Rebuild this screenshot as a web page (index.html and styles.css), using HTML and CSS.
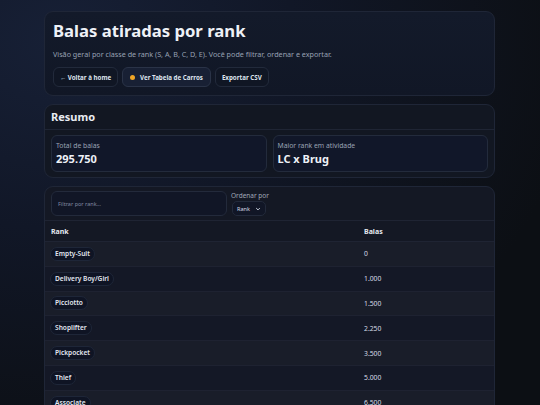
FILE: index.html
```html
<!DOCTYPE html>
<html lang="pt-BR">
<head>
<meta charset="utf-8">
<title>Balas atiradas por rank</title>
<link rel="stylesheet" href="styles.css">
</head>
<body>
<main class="wrap">
  <section class="card hero">
    <h1 class="title">Balas atiradas por rank</h1>
    <p class="sub">Visão geral por classe de rank (S, A, B, C, D, E). Você pode filtrar, ordenar e exportar.</p>
    <div class="actions">
      <a class="btn">← Voltar à home</a>
      <a class="btn btn-alt"><span class="dot"></span>Ver Tabela de Carros</a>
      <a class="btn">Exportar CSV</a>
    </div>
  </section>

  <section class="card summary">
    <h2 class="sum-title">Resumo</h2>
    <div class="stats">
      <div class="stat"><div class="stat-label">Total de balas</div><div class="stat-value">295.750</div></div>
      <div class="stat"><div class="stat-label">Maior rank em atividade</div><div class="stat-value">LC x Brug</div></div>
    </div>
  </section>

  <section class="card tablecard">
    <div class="controls">
      <div class="search">Filtrar por rank...</div>
      <div class="order">
        <div class="order-label">Ordenar por</div>
        <div class="select">Rank <svg class="chev" viewBox="0 0 10 10" width="6" height="6"><path d="M2 3.5 L5 6.5 L8 3.5" fill="none" stroke="#cfd6e4" stroke-width="1.6"/></svg></div>
      </div>
    </div>
    <table class="tbl">
      <thead><tr><th class="c1">Rank</th><th>Balas</th></tr></thead>
      <tbody>
        <tr><td class="c1"><span class="pill">Empty-Suit</span></td><td>0</td></tr>
        <tr><td class="c1"><span class="pill">Delivery Boy/Girl</span></td><td>1.000</td></tr>
        <tr><td class="c1"><span class="pill">Picciotto</span></td><td>1.500</td></tr>
        <tr><td class="c1"><span class="pill">Shoplifter</span></td><td>2.250</td></tr>
        <tr><td class="c1"><span class="pill">Pickpocket</span></td><td>3.500</td></tr>
        <tr><td class="c1"><span class="pill">Thief</span></td><td>5.000</td></tr>
        <tr><td class="c1"><span class="pill">Associate</span></td><td>6.500</td></tr>
      </tbody>
    </table>
  </section>
</main>
</body>
</html>
```

FILE: styles.css
```css
html, body {
  margin: 0;
  padding: 0;
  height: 100%;
}
body {
  font-family: "Noto Sans", "Open Sans", sans-serif;
  color: #e6eaf2;
  background: radial-gradient(ellipse 520px 420px at 60px 40px, #172036 0%, #111727 45%, #0c0f14 100%);
  background-color: #0c0f14;
  overflow: hidden;
}
.wrap {
  width: 451px;
  margin: 0 0 0 44px;
  padding-top: 11px;
  display: flex;
  flex-direction: column;
  gap: 8px;
}
.card {
  background: #121826;
  border: 1px solid #1f2637;
  border-radius: 9px;
  box-sizing: border-box;
}
.hero {
  padding: 7px 8px 8px 8px;
  background: linear-gradient(180deg, #131a2a, #111726);
}
.title {
  margin: 0;
  font-size: 16.7px;
  line-height: 24px;
  font-weight: 700;
  color: #eef1f7;
}
.sub {
  margin: 6px 0 0 0;
  font-size: 7.2px;
  line-height: 10px;
  color: #98a1b3;
}
.actions {
  margin-top: 8px;
  display: flex;
  gap: 4px;
}
.btn {
  display: flex;
  align-items: center;
  height: 20px;
  padding: 0 6px;
  box-sizing: border-box;
  border: 1px solid #222a3b;
  border-radius: 6px;
  background: #101624;
  font-size: 6.2px;
  font-weight: 700;
  color: #dfe5ef;
}
.btn-alt {
  background: #182034;
  border-color: #2a3347;
  padding: 0 7px;
}
.dot {
  width: 5px;
  height: 5px;
  border-radius: 50%;
  background: #f0a526;
  margin-right: 5px;
}
.summary {
  background: #121722;
}
.sum-title {
  margin: 0;
  padding: 0 6px;
  height: 24px;
  line-height: 24px;
  font-size: 11px;
  font-weight: 700;
  color: #e8ecf3;
  border-bottom: 1px solid #1f2534;
}
.stats {
  padding: 5px 6px 5px 6px;
  display: grid;
  grid-template-columns: 1fr 1fr;
  gap: 6px;
}
.stat {
  height: 37px;
  box-sizing: border-box;
  border: 1px solid #232b3c;
  border-radius: 6px;
  background: #111729;
  padding: 4px 4px;
}
.stat-label {
  font-size: 6.8px;
  line-height: 11px;
  color: #9aa3b4;
}
.stat-value {
  font-size: 11px;
  line-height: 15px;
  font-weight: 700;
  color: #eef1f7;
}
.tablecard {
  background: #141824;
  overflow: hidden;
}
.controls {
  display: flex;
  gap: 4px;
  padding: 4px 6px 4px 6px;
  border-bottom: 1px solid #1f2433;
}
.search {
  width: 176px;
  height: 25px;
  box-sizing: border-box;
  border: 1px solid #232a3b;
  border-radius: 6px;
  background: #111626;
  font-size: 5.5px;
  color: #8189a0;
  padding: 0 6px;
  display: flex;
  align-items: center;
}
.order-label {
  font-size: 6.5px;
  line-height: 9px;
  color: #a0a8b8;
}
.select {
  margin-top: 1px;
  margin-left: 1px;
  width: 34px;
  height: 15px;
  box-sizing: border-box;
  border: 1px solid #232a3b;
  border-radius: 5px;
  background: #111626;
  font-size: 5.5px;
  color: #d8dde8;
  display: flex;
  align-items: center;
  justify-content: center;
  gap: 5px;
}
.tbl {
  width: 100%;
  border-collapse: collapse;
}
.tbl th {
  text-align: left;
  font-size: 7px;
  font-weight: 700;
  color: #e4e8f0;
  height: 20px;
  padding: 0 6px;
  border-bottom: 1px solid #1f2433;
}
.tbl td {
  height: 23.8px;
  padding: 0 6px;
  font-size: 6.8px;
  color: #d6dbe5;
  border-bottom: 1px solid #1e2231;
}
.tbl th.c1 {
  width: 301px;
}
.tbl td.c1 {
  padding-left: 5px;
}
.tbl tbody tr:nth-child(odd) {
  background: #191d29;
}
.tbl tbody tr:nth-child(even) {
  background: #141826;
}
.pill {
  display: inline-block;
  height: 12px;
  line-height: 12px;
  padding: 0 4px;
  border-radius: 7px;
  background: #0f1424;
  border: 1px solid #1e2638;
  font-size: 6.6px;
  font-weight: 600;
  color: #e3e8f1;
}
```
